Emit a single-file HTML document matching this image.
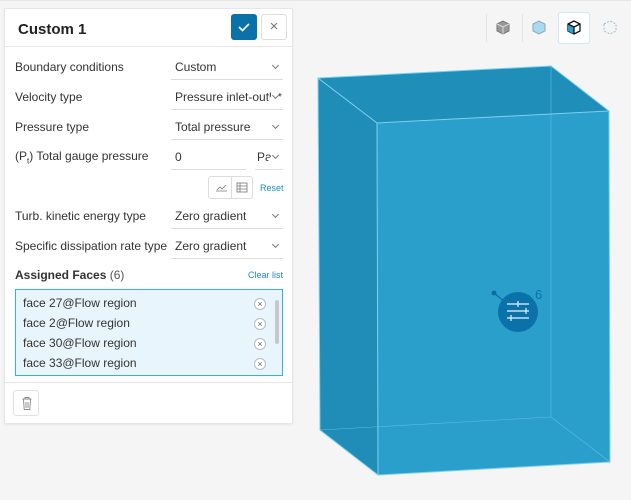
<!DOCTYPE html>
<html><head><meta charset="utf-8"><style>
*{box-sizing:border-box;margin:0;padding:0}
body{width:631px;height:500px;background:#f5f5f5;font-family:"Liberation Sans",sans-serif;position:relative;overflow:hidden;color:#333}
.panel{position:absolute;left:4px;top:8px;width:289px;height:416px;background:#fff;border:1px solid #e6e6e6;box-shadow:0 1px 2px rgba(0,0,0,.06)}
.hdr{height:38px;border-bottom:1px solid #e8e8e8;position:relative}
.hdr h1{position:absolute;left:13px;top:12px;font-size:15px;font-weight:bold;color:#222}
.ok{position:absolute;left:226px;top:5px;width:26px;height:26px;background:#0a72a8;border-radius:3px}
.cl{position:absolute;left:256px;top:5px;width:26px;height:26px;border:1px solid #ddd;border-radius:3px;color:#777;text-align:center;line-height:23px;font-size:15px}
.row{position:absolute;left:10px;font-size:12px;color:#333}
.sel{position:absolute;left:166px;width:112px;height:27px;border-bottom:1px solid #ddd;font-size:12px;padding:7px 4px 0;white-space:nowrap;overflow:hidden}
.sel:after{content:"";position:absolute;right:5px;top:10px;width:4px;height:4px;border-right:1px solid #777;border-bottom:1px solid #777;transform:rotate(45deg);background:#fff;box-shadow:3px 3px 0 3px #fff}
.sel.nc:after{display:none}
.list{position:absolute;left:10px;top:280px;width:268px;height:87px;background:#e8f5fc;border:1px solid #38b0de}
.it{position:absolute;left:7px;font-size:12px;color:#333}
.x{position:absolute;left:238px;width:12px;height:12px;border:1px solid #bbb;border-radius:50%;background:#fff;font-size:9px;line-height:10px;text-align:center;color:#666}
</style></head><body>
<div class="panel">
<div class="hdr"><h1>Custom 1</h1>
<div class="ok"><svg width="26" height="26"><path d="M8 13l3.5 3.5L18 10" stroke="#fff" stroke-width="1.6" fill="none"/></svg></div>
<div class="cl">×</div></div>
<div class="row" style="top:51px">Boundary conditions</div><div class="sel" style="top:44px">Custom</div>
<div class="row" style="top:81px">Velocity type</div><div class="sel" style="top:74px;padding-right:14px">Pressure inlet-outlet</div>
<div class="row" style="top:111px">Pressure type</div><div class="sel" style="top:104px">Total pressure</div>
<div class="row" style="top:140px">(P<sub style="font-size:8px">t</sub>) Total gauge pressure</div>
<div class="sel nc" style="top:134px;width:75px">0</div>
<div class="sel" style="top:134px;left:250px;width:28px;padding-left:2px">Pa</div>
<div style="position:absolute;left:203px;top:167px;width:45px;height:23px;border:1px solid #ddd;border-radius:3px"><div style="position:absolute;left:22px;top:0;height:21px;border-left:1px solid #ddd"></div>
<svg width="45" height="22" style="position:absolute;left:0;top:0"><path d="M7 14h11M8 13l3-3 2 2 4-4" stroke="#777" fill="none" stroke-width=".8"/><rect x="28" y="6" width="10" height="9" stroke="#777" fill="none" stroke-width=".8"/><path d="M28 9h10M28 12h10M31 6v9" stroke="#777" stroke-width=".8"/></svg></div>
<div style="position:absolute;left:255px;top:174px;font-size:9px;color:#1a8cc0">Reset</div>
<div class="row" style="top:200px">Turb. kinetic energy type</div><div class="sel" style="top:193px">Zero gradient</div>
<div class="row" style="top:230px">Specific dissipation rate type</div><div class="sel" style="top:223px">Zero gradient</div>
<div class="row" style="top:259px;font-weight:bold">Assigned Faces <span style="font-weight:normal;color:#555">(6)</span></div>
<div style="position:absolute;left:243px;top:261px;font-size:9px;color:#1a8cc0">Clear list</div>
<div class="list">
<div class="it" style="top:6px">face 27@Flow region</div><div class="x" style="top:8px">×</div>
<div class="it" style="top:26px">face 2@Flow region</div><div class="x" style="top:28px">×</div>
<div class="it" style="top:46px">face 30@Flow region</div><div class="x" style="top:48px">×</div>
<div class="it" style="top:66px">face 33@Flow region</div><div class="x" style="top:68px">×</div>
<div style="position:absolute;left:259px;top:10px;width:4px;height:44px;background:#c8c8c8;border-radius:2px"></div>
</div>
<div style="position:absolute;left:0;top:373px;width:287px;border-top:1px solid #e8e8e8"></div>
<div style="position:absolute;left:8px;top:381px;width:26px;height:26px;border:1px solid #e0e0e0;border-radius:3px"><svg width="26" height="26"><path d="M8.5 8h9M11 8V6.5h4V8M9.5 8.5l.7 10h5.6l.7-10M12 11v6M14 11v6" stroke="#888" fill="none" stroke-width=".9"/></svg></div>
</div>
<div style="position:absolute;left:0;top:0;width:631px;height:1px;background:#e6e6e6"></div>
<div style="position:absolute;left:486px;top:14px;height:28px;border-left:1px solid #e4e4e4"></div>
<div style="position:absolute;left:522px;top:14px;height:28px;border-left:1px solid #e4e4e4"></div>
<div style="position:absolute;left:558px;top:12px;width:32px;height:32px;border:1px solid #cfe6f3;border-radius:3px;background:#fff"></div>
<svg width="631" height="500" style="position:absolute;left:0;top:0">
<g stroke-width="1"><path d="M497 24l6-3 6 3v7l-6 3-6-3z" fill="#999" stroke="#777"/><path d="M497 24l6 3 6-3M503 27v7" stroke="#ddd" fill="none"/>
<path d="M533 24l6-3 6 3v7l-6 3-6-3z" fill="#a9dbee" stroke="#8ab"/>
<path d="M568 24l6-3 6 3v7l-6 3-6-3z" fill="#fff" stroke="#111" stroke-width="1.3"/><path d="M568 24l6 3v7l-6-3z" fill="#2aa0cc"/><path d="M568 24l6 3 6-3M574 27v7" stroke="#111" fill="none" stroke-width="1.3"/>
<path d="M604 24l6-3 6 3v7l-6 3-6-3z" fill="none" stroke="#9bc" stroke-dasharray="2 1.5"/></g>
<polygon points="318,78 551,66 609,111 610,462 378,475 320,430" fill="#2a9fcb"/>
<polygon points="318,78 551,66 609,111 377,123" fill="#1f8eb8"/>
<polygon points="318,78 377,123 378,475 320,430" fill="#1f8db7"/>
<g stroke="#7fd0f0" fill="none" stroke-width="1">
<path d="M318,78 L551,66 L609,111 L377,123 Z M377,123 L378,475 M609,111 L610,462 L378,475 L320,430 L318,78"/>
<path d="M551,66 L551,417 M320,430 L551,417 L610,462" stroke="#5cc0e6" stroke-width=".6"/></g>
<line x1="494" y1="293" x2="505" y2="302" stroke="#0a6f9e" stroke-width="1.2"/><circle cx="494" cy="293" r="2.5" fill="#0a6f9e"/>
<circle cx="518" cy="312" r="20" fill="#0a72a8"/>
<path d="M507 304h22M507 311h22M507 318h22M518 301v6M526 308v6M511 315v6" stroke="#e6f4fb" stroke-width="1.2"/>
<text x="535" y="299" font-family="Liberation Sans,sans-serif" font-size="13" fill="#0a72a8">6</text>
</svg>
</body></html>
